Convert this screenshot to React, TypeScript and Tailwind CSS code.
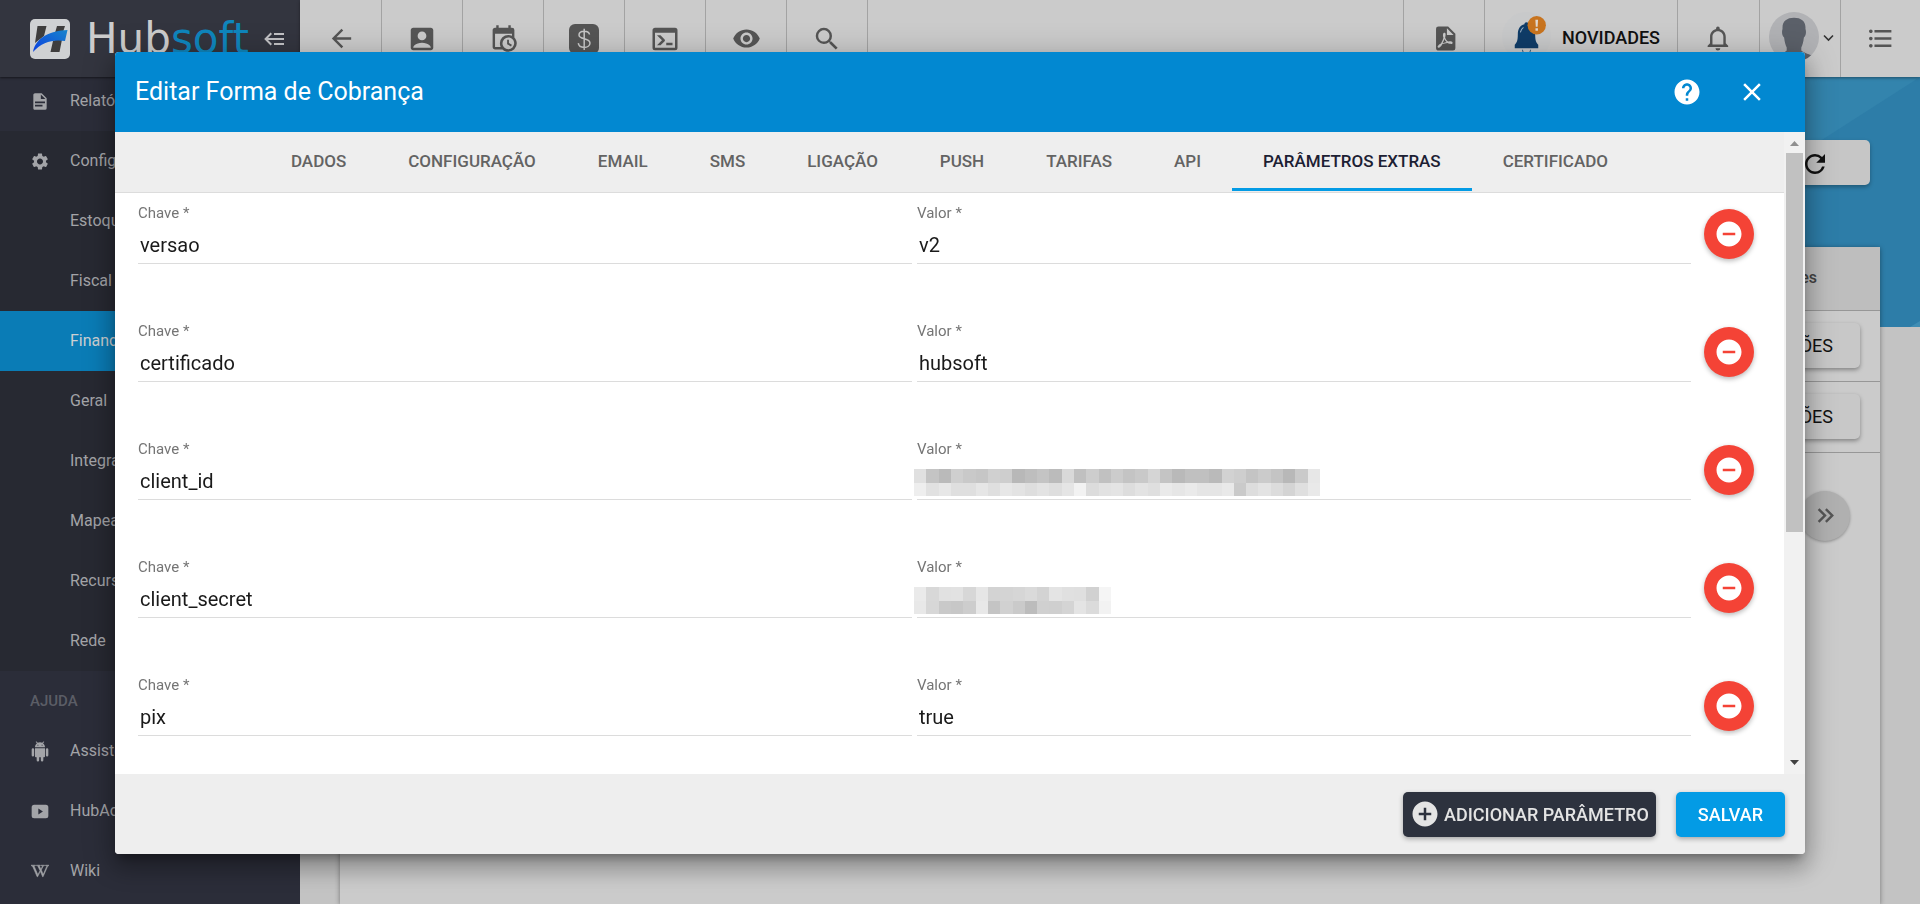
import { useState } from 'react';
import type { ReactNode } from 'react';
import clsx from 'clsx';
import {
  MdAccountBox,
  MdAddCircle,
  MdArrowBack,
  MdClose,
  MdFormatListBulleted,
  MdHelp,
  MdRefresh,
  MdRemoveCircle,
  MdRemoveRedEye,
  MdSearch,
  MdSettings,
} from 'react-icons/md';
import { FaWikipediaW } from 'react-icons/fa';

const icons = {
  calendarClock:
    'M15,13H16.5V15.82L18.94,17.23L18.19,18.53L15,16.69V13M19,8H5V19H9.67C9.24,18.09 9,17.07 9,16A7,7 0 0,1 16,9C17.07,9 18.09,9.24 19,9.67V8M5,21C3.89,21 3,20.1 3,19V5C3,3.89 3.89,3 5,3H6V1H8V3H16V1H18V3H19A2,2 0 0,1 21,5V11.1C22.24,12.36 23,14.09 23,16A7,7 0 0,1 16,23C14.09,23 12.36,22.24 11.1,21H5M16,11.15A4.85,4.85 0 0,0 11.15,16C11.15,18.68 13.32,20.85 16,20.85A4.85,4.85 0 0,0 20.85,16C20.85,13.32 18.68,11.15 16,11.15Z',
  console:
    'M20,19V7H4V19H20M20,3A2,2 0 0,1 22,5V19A2,2 0 0,1 20,21H4A2,2 0 0,1 2,19V5C2,3.89 2.9,3 4,3H20M13,17V15H18V17H13M9.58,13L5.57,9H8.4L11.7,12.3C12.09,12.69 12.09,13.33 11.7,13.72L8.42,17H5.59L9.58,13Z',
  filePdf:
    'M14,9H19.5L14,3.5V9M7,2H15L21,8V20A2,2 0 0,1 19,22H7C5.89,22 5,21.1 5,20V4A2,2 0 0,1 7,2M11.93,12.44C12.34,13.34 12.86,14.08 13.46,14.59L13.87,14.91C13,15.07 11.8,15.35 10.53,15.84L10.42,15.88L10.92,14.84C11.37,13.97 11.7,13.18 11.93,12.44M18.41,16.25C18.59,16.07 18.68,15.84 18.69,15.59C18.72,15.39 18.67,15.2 18.57,15.04C18.28,14.57 17.53,14.35 16.29,14.35L15,14.42L14.13,13.84C13.5,13.32 12.93,12.41 12.53,11.28L12.57,11.14C12.9,9.81 13.21,8.2 12.55,7.54C12.39,7.38 12.17,7.3 11.94,7.3H11.7C11.33,7.3 11,7.69 10.91,8.07C10.54,9.4 10.76,10.13 11.13,11.34V11.35C10.88,12.23 10.56,13.25 10.05,14.28L9.09,16.08L8.2,16.57C7,17.32 6.43,18.16 6.32,18.69C6.28,18.88 6.3,19.05 6.37,19.23L6.4,19.28L6.88,19.59L7.32,19.7C8.13,19.7 9.05,18.75 10.29,16.63L10.47,16.56C11.5,16.23 12.78,16 14.5,15.81C15.53,16.32 16.74,16.55 17.5,16.55C17.94,16.55 18.24,16.44 18.41,16.25Z',
  bell: 'M16,17H7V10.5C7,8 9,6 11.5,6C14,6 16,8 16,10.5M18,16V10.5C18,7.43 15.86,4.86 13,4.18V3.5A1.5,1.5 0 0,0 11.5,2A1.5,1.5 0 0,0 10,3.5V4.18C7.13,4.86 5,7.43 5,10.5V16L3,18V19H20V18M11.5,22A2,2 0 0,0 13.5,20H9.5A2,2 0 0,0 11.5,22Z',
  collapse:
    'M5,13L9,17L7.6,18.42L1.18,12L7.6,5.58L9,7L5,11H21V13H5M21,6V8H11V6H21M21,16V18H11V16H21Z',
  document:
    'M13,9H18.5L13,3.5V9M6,2H14L20,8V20A2,2 0 0,1 18,22H6C4.89,22 4,21.1 4,20V4C4,2.89 4.89,2 6,2M15,18V16H6V18H15M18,14V12H6V14H18Z',
  android:
    'M15,5H14V4H15M10,5H9V4H10M15.53,2.16L16.84,0.85C17.03,0.66 17.03,0.34 16.84,0.14C16.64,-0.05 16.32,-0.05 16.13,0.14L14.65,1.62C13.85,1.23 12.95,1 12,1C11.04,1 10.14,1.23 9.34,1.63L7.85,0.14C7.66,-0.05 7.34,-0.05 7.15,0.14C6.95,0.34 6.95,0.66 7.15,0.85L8.46,2.16C6.97,3.26 6,5 6,7H18C18,5 17,3.25 15.53,2.16M20.5,8A1.5,1.5 0 0,0 19,9.5V16.5A1.5,1.5 0 0,0 20.5,18A1.5,1.5 0 0,0 22,16.5V9.5A1.5,1.5 0 0,0 20.5,8M3.5,8A1.5,1.5 0 0,0 2,9.5V16.5A1.5,1.5 0 0,0 3.5,18A1.5,1.5 0 0,0 5,16.5V9.5A1.5,1.5 0 0,0 3.5,8M6,18A1,1 0 0,0 7,19H8V22.5A1.5,1.5 0 0,0 9.5,24A1.5,1.5 0 0,0 11,22.5V19H13V22.5A1.5,1.5 0 0,0 14.5,24A1.5,1.5 0 0,0 16,22.5V19H17A1,1 0 0,0 18,18V8H6V18Z',
  play: 'M5,4H19A3,3 0 0,1 22,7V17A3,3 0 0,1 19,20H5A3,3 0 0,1 2,17V7A3,3 0 0,1 5,4M10,8.5V15.5L15.5,12Z',
  doubleRight:
    'M5.59,7.41L7,6L13,12L7,18L5.59,16.59L10.17,12L5.59,7.41M11.59,7.41L13,6L19,12L13,18L11.59,16.59L16.17,12L11.59,7.41Z',
};

function Icon({ path, size = 29 }: { path: string; size?: number }) {
  return (
    <svg width={size} height={size} viewBox="0 0 24 24" fill="currentColor" fillRule="evenodd" aria-hidden="true">
      <path d={path} />
    </svg>
  );
}

function DollarIcon() {
  return (
    <svg width="30" height="30" viewBox="0 0 30 30" aria-hidden="true">
      <rect width="30" height="30" rx="6" fill="currentColor" />
      <path
        d="M20.5 10.5C20.2 8.4 18 7.2 15.2 7.2C12.2 7.2 10 8.7 10 11C10 16 21 13.4 21 19C21 21.6 18.4 23.4 15.2 23.4C12 23.4 9.6 21.8 9.3 19.2M15.2 4.8V26"
        fill="none"
        stroke="#c8c8c8"
        strokeWidth="1.5"
      />
    </svg>
  );
}

function LogoMark() {
  return (
    <svg width="40" height="40" viewBox="0 0 40 40" aria-hidden="true">
      <defs>
        <linearGradient id="swoosh" x1="0" y1="1" x2="1" y2="0">
          <stop offset="0" stopColor="#0a3fe0" />
          <stop offset="1" stopColor="#1784cc" />
        </linearGradient>
      </defs>
      <rect width="40" height="40" rx="5" fill="#cfd1d3" />
      <path d="M7.5 7H16.5L14 17L5 24Z M27 7H35L33 13L25 14Z M23 22L32.5 18L29.5 33H20.5Z" fill="#3e3d3d" />
      <path d="M3 33C6 18 20 12 37.5 11L35 22C23 20 12 23 3 33Z" fill="url(#swoosh)" />
    </svg>
  );
}

function NewsBell() {
  return (
    <svg width="49" height="49" viewBox="0 0 48 48" aria-hidden="true">
      <circle cx="24" cy="24" r="24" fill="#c8c9ca" />
      <path
        d="M24 10C25.3 10 26 10.8 26 12C30.5 13 32.5 17 32.5 22C32.5 28 33.5 30 35.5 32V35.5H12.5V32C14.5 30 15.5 28 15.5 22C15.5 17 17.5 13 22 12C22 10.8 22.7 10 24 10Z"
        fill="#0f3c68"
      />
      <path d="M20 37C20.5 40 22 41.5 24 41.5S27.5 40 28 37" fill="none" stroke="#3d5f80" strokeDasharray="3 2" />
      <path d="M18 20C18.5 17.5 19.5 16 21 15" fill="none" stroke="#9fb4c8" />
      <circle cx="34" cy="13" r="9" fill="#c8741f" />
      <path d="M32.7 7.5H35.3L34.9 14.5H33.1Z M32.8 16H35.2V18.4H32.8Z" fill="#e0d8cf" />
    </svg>
  );
}

function Avatar() {
  return (
    <svg width="50" height="50" viewBox="0 0 48 48" className="shrink-0" aria-hidden="true">
      <defs>
        <clipPath id="avatar">
          <circle cx="24" cy="24" r="24" />
        </clipPath>
      </defs>
      <g clipPath="url(#avatar)">
        <rect width="48" height="48" fill="#b1b2b5" />
        <path
          d="M13 16C12.5 9 17 5.5 24 5.5S35.5 9 35 16C36 19 35.5 23 33.5 24.5C33 29 32 32 31 34V37C34 40 39 40 43 43L38 48H8L5 43C9 40 14 40 17 37V34C16 32 15 29 14.5 24.5C12.5 23 12 19 13 16Z"
          fill="#5b6069"
        />
      </g>
    </svg>
  );
}

type NavItem = { label: string; icon?: ReactNode; active?: boolean };

const configItems: NavItem[] = [
  { label: 'Configurações', icon: <MdSettings size={21} /> },
  { label: 'Estoque' },
  { label: 'Fiscal' },
  { label: 'Financeiro', active: true },
  { label: 'Geral' },
  { label: 'Integração' },
  { label: 'Mapeamento' },
  { label: 'Recursos' },
  { label: 'Rede' },
];

const helpItems: NavItem[] = [
  { label: 'Assistente', icon: <Icon path={icons.android} size={21} /> },
  { label: 'HubAcademy', icon: <Icon path={icons.play} size={21} /> },
  { label: 'Wiki', icon: <FaWikipediaW size={18} stroke="currentColor" strokeWidth={20} /> },
];

function NavLink({ label, icon, active }: NavItem) {
  return (
    <a
      href="#"
      className={clsx(
        'flex h-[60px] shrink-0 items-center pl-[30px] text-base',
        active ? 'bg-[#0a7cb6] text-[#cdd0d2]' : 'text-[#a3a4a8]',
      )}
    >
      <span className="flex w-5 justify-center">{icon}</span>
      <span className="pl-5">{label}</span>
    </a>
  );
}

function Sidebar() {
  return (
    <aside className="flex w-[300px] shrink-0 flex-col bg-[#2b2d39]">
      <div className="z-10 flex h-[77px] shrink-0 items-center bg-[#33353f] pl-[30px] shadow-[0_1px_2px_rgba(0,0,0,0.5)]">
        <LogoMark />
        <span className="w-[193px] pl-4 font-['DejaVu_Sans',sans-serif] text-[42px] leading-9 text-[#cdcdcd]">
          Hub<span className="text-[#0f86bd]">soft</span>
        </span>
        <button aria-label="Recolher menu" className="text-[#c2c2c5]">
          <Icon path={icons.collapse} size={24} />
        </button>
      </div>
      <nav className="-mt-[6px] flex flex-col">
        <NavLink label="Relatórios" icon={<Icon path={icons.document} size={21} />} />
        <div className="flex flex-col bg-[#272932]">
          {configItems.map((item) => (
            <NavLink key={item.label} {...item} />
          ))}
        </div>
        <h3 className="flex h-[50px] items-center pt-[10px] pl-[30px] text-[15px] font-medium text-[#5b5d66]">AJUDA</h3>
        {helpItems.map((item) => (
          <NavLink key={item.label} {...item} />
        ))}
      </nav>
    </aside>
  );
}

const shortcuts = [
  { label: 'Voltar', icon: <MdArrowBack size={29} /> },
  { label: 'Clientes', icon: <MdAccountBox size={30} /> },
  { label: 'Agenda', icon: <Icon path={icons.calendarClock} /> },
  { label: 'Financeiro', icon: <DollarIcon /> },
  { label: 'Terminal', icon: <Icon path={icons.console} size={30} /> },
  { label: 'Visualizar', icon: <MdRemoveRedEye size={29} /> },
  { label: 'Buscar', icon: <MdSearch size={30} /> },
];

function Toolbar() {
  return (
    <header className="z-10 flex h-[77px] shrink-0 justify-between bg-[#cbcbcb] text-[#555555] shadow-[0_1px_3px_rgba(0,0,0,0.4)]">
      <div className="flex pl-px">
        {shortcuts.map((s) => (
          <button
            key={s.label}
            aria-label={s.label}
            className="flex w-[81px] items-center justify-center border-r border-[#a3a3a3]"
          >
            {s.icon}
          </button>
        ))}
      </div>
      <div className="flex">
        <button aria-label="PDF" className="flex w-[81px] items-center justify-center border-l border-[#a3a3a3]">
          <Icon path={icons.filePdf} />
        </button>
        <button className="flex w-[193px] items-start gap-[11px] border-l border-[#a3a3a3] pt-3 pl-[17px] text-[18px] font-medium text-[#111111]">
          <NewsBell />
          <span className="pt-3">NOVIDADES</span>
        </button>
        <button aria-label="Notificações" className="flex w-[82px] items-center justify-center border-l border-[#a3a3a3]">
          <Icon path={icons.bell} />
        </button>
        <button aria-label="Conta" className="flex w-[81px] items-start gap-1 border-l border-[#a3a3a3] pt-3 pl-[9px]">
          <Avatar />
          <svg width="11" height="52" viewBox="0 0 11 52" className="shrink-0" aria-hidden="true">
            <path d="M1 23.5L5.5 28L10 23.5" fill="none" stroke="#333333" strokeWidth="1.6" />
          </svg>
        </button>
        <button aria-label="Lista" className="flex w-20 items-center justify-center border-l border-[#a3a3a3]">
          <MdFormatListBulleted size={29} />
        </button>
      </div>
    </header>
  );
}

function BackgroundPage() {
  return (
    <main className="relative flex grow flex-col bg-[#c3c3c3] px-10">
      <svg
        className="absolute inset-x-0 top-0 h-[250px] w-full"
        viewBox="0 0 1620 250"
        preserveAspectRatio="none"
        aria-hidden="true"
      >
        <rect width="1620" height="250" fill="#2d7da8" />
        <path d="M900 0H1620L1230 250H700Z" fill="#3384ad" />
        <path d="M1620 244V250H1610Z" fill="#3f8db4" />
      </svg>
      <div className="relative flex justify-end pt-[63px] pr-[10px]">
        <button
          aria-label="Atualizar"
          className="flex h-[45px] w-40 items-center justify-end rounded-[5px] bg-[#c6c6c6] pt-0.5 pr-10 text-[#111111] shadow-[0_2px_4px_rgba(0,0,0,0.3)]"
        >
          <MdRefresh size={30} />
        </button>
      </div>
      <section className="relative mt-[62px] flex grow flex-col bg-[#cbcbcb] shadow-[0_1px_5px_rgba(0,0,0,0.4)]">
        <table className="w-full text-right">
          <thead>
            <tr className="h-[63px] border-b border-[#979797] bg-[#bebebe]">
              <th className="pr-[63px] text-base font-medium text-[#444444]">Ações</th>
            </tr>
          </thead>
          <tbody>
            {[1, 2].map((row) => (
              <tr key={row} className="h-[71px] border-b border-[#979797]">
                <td className="pr-5">
                  <button className="h-[45px] rounded-[5px] bg-[#c8c8c8] px-[27px] text-[18px] text-[#111111] shadow-[0_2px_4px_rgba(0,0,0,0.35)]">
                    AÇÕES
                  </button>
                </td>
              </tr>
            ))}
          </tbody>
        </table>
        <div className="flex justify-end pt-[38px] pr-[30px]">
          <button
            aria-label="Próxima página"
            className="flex size-[50px] items-center justify-center rounded-full bg-[#b0b0b0] text-[#555555] shadow-[0_1px_3px_rgba(0,0,0,0.3)]"
          >
            <Icon path={icons.doubleRight} />
          </button>
        </div>
      </section>
    </main>
  );
}

// Two rows of grey levels that cover a secret value
const masks: Record<string, number[][]> = {
  client_id: [
    [224, 196, 186, 207, 201, 198, 208, 206, 184, 190, 196, 187, 217, 192, 205, 193, 204, 196, 201, 213, 196, 185, 192, 192, 186, 210, 206, 196, 203, 196, 184, 202, 231],
    [238, 225, 231, 223, 223, 230, 223, 231, 227, 222, 227, 222, 229, 242, 220, 226, 228, 221, 227, 223, 234, 230, 234, 229, 229, 233, 202, 221, 227, 220, 212, 223, 233],
  ],
  client_secret: [
    [234, 216, 225, 226, 215, 230, 211, 212, 214, 218, 211, 228, 224, 223, 209, 245],
    [232, 215, 201, 199, 205, 232, 196, 209, 202, 188, 208, 207, 212, 228, 219, 242],
  ],
};

function Mask({ levels }: { levels: number[][] }) {
  const columns = levels[0].length;
  return (
    <svg
      className="absolute bottom-[3px] -left-[3px]"
      height="27"
      width={Math.round(columns * 12.3)}
      viewBox={`0 0 ${columns} 2`}
      preserveAspectRatio="none"
      shapeRendering="crispEdges"
      aria-hidden="true"
    >
      {levels.map((row, y) =>
        row.map((v, x) => <rect key={`${x}-${y}`} x={x} y={y} width="1" height="1" fill={`rgb(${v},${v},${v})`} />),
      )}
    </svg>
  );
}

type FieldProps = { id: string; label: string; value: string; mask?: number[][] };

function Field({ id, label, value, mask }: FieldProps) {
  return (
    <div className="relative flex flex-1 flex-col border-b border-[#dcdcdc]">
      <label htmlFor={id} className="text-[15px] leading-5 text-[#757575]">
        {label} *
      </label>
      <input
        id={id}
        defaultValue={value}
        className="mt-1 h-9 w-full bg-transparent px-0.5 text-[20px] text-[#1a1a1a] outline-none"
      />
      {mask && <Mask levels={mask} />}
    </div>
  );
}

const parametros = [
  { chave: 'versao', valor: 'v2' },
  { chave: 'certificado', valor: 'hubsoft' },
  { chave: 'client_id', valor: '' },
  { chave: 'client_secret', valor: '' },
  { chave: 'pix', valor: 'true' },
];

const tabs = [
  'DADOS',
  'CONFIGURAÇÃO',
  'EMAIL',
  'SMS',
  'LIGAÇÃO',
  'PUSH',
  'TARIFAS',
  'API',
  'PARÂMETROS EXTRAS',
  'CERTIFICADO',
];

function EditDialog() {
  const [activeTab, setActiveTab] = useState('PARÂMETROS EXTRAS');

  return (
    <div
      role="dialog"
      aria-label="Editar Forma de Cobrança"
      className="flex w-full flex-col overflow-hidden rounded bg-white shadow-[0_7px_9px_-4px_rgba(0,0,0,0.3),0_14px_22px_2px_rgba(0,0,0,0.2),0_5px_30px_5px_rgba(0,0,0,0.18)]"
    >
      <div className="flex h-20 shrink-0 items-center bg-[#0288d1] pr-7 pl-5 text-white">
        <h2 className="grow text-[25px]">Editar Forma de Cobrança</h2>
        <button aria-label="Ajuda" className="mr-[15px] flex size-[50px] items-center justify-center">
          <MdHelp size={30} />
        </button>
        <button aria-label="Fechar" className="flex size-[50px] items-center justify-center">
          <MdClose size={30} />
        </button>
      </div>

      <div className="flex min-h-0 grow">
        <div className="flex min-w-0 grow flex-col">
          <div role="tablist" className="flex h-[61px] shrink-0 justify-center border-b border-[#dcdcdc] bg-[#eeeeee]">
            {tabs.map((tab) => (
              <button
                key={tab}
                role="tab"
                aria-selected={tab === activeTab}
                onClick={() => setActiveTab(tab)}
                className={clsx(
                  'h-[59px] border-b-[3px] px-[31px] pt-1 text-[17px] font-medium',
                  tab === activeTab ? 'border-[#039be5] text-[#1c2033]' : 'border-transparent text-[#636363]',
                )}
              >
                {tab}
              </button>
            ))}
          </div>

          <div className="flex flex-col gap-[57px] overflow-hidden pt-[10px] pr-[30px] pl-[23px]">
            {parametros.map((p) => (
              <div key={p.chave} className="flex items-center">
                <div className="flex grow gap-[5px]">
                  <Field id={`chave-${p.chave}`} label="Chave" value={p.chave} />
                  <Field id={`valor-${p.chave}`} label="Valor" value={p.valor} mask={masks[p.chave]} />
                </div>
                <button
                  aria-label="Remover parâmetro"
                  className="ml-[13px] flex size-[50px] shrink-0 items-center justify-center rounded-full bg-[#f44336] text-white shadow-[0_2px_5px_rgba(0,0,0,0.28)]"
                >
                  <MdRemoveCircle size={30} />
                </button>
              </div>
            ))}
          </div>
        </div>

        <div className="flex w-[21px] shrink-0 flex-col items-center bg-[#f1f1f1]" aria-hidden="true">
          <svg width="9" height="21" viewBox="0 0 9 21">
            <path d="M0 14H9L4.5 9Z" fill="#8f8f8f" />
          </svg>
          <div className="h-[59%] w-[17px] bg-[#c1c1c1]" />
          <svg className="mt-auto" width="9" height="21" viewBox="0 0 9 21">
            <path d="M0 7H9L4.5 12Z" fill="#404040" />
          </svg>
        </div>
      </div>

      <div className="flex h-20 shrink-0 items-center justify-end gap-5 bg-[#eeeeee] pr-5">
        <button className="flex h-[45px] items-center gap-1 rounded-[5px] bg-[#2d323e] px-[7px] text-[18px] font-medium text-[#e4e4e4] shadow-[0_2px_5px_rgba(0,0,0,0.3)]">
          <MdAddCircle size={30} />
          ADICIONAR PARÂMETRO
        </button>
        <button className="h-[45px] rounded-[5px] bg-[#039be5] px-[22px] text-[18px] font-medium text-white shadow-[0_2px_5px_rgba(0,0,0,0.3)]">
          SALVAR
        </button>
      </div>
    </div>
  );
}

export default function App() {
  return (
    <div className="flex h-screen overflow-hidden font-[Roboto,sans-serif]">
      <Sidebar />
      <div className="flex min-w-0 grow flex-col">
        <Toolbar />
        <BackgroundPage />
      </div>
      <div className="fixed inset-0 z-20 flex px-[115px] pt-[52px] pb-[50px]">
        <EditDialog />
      </div>
    </div>
  );
}
